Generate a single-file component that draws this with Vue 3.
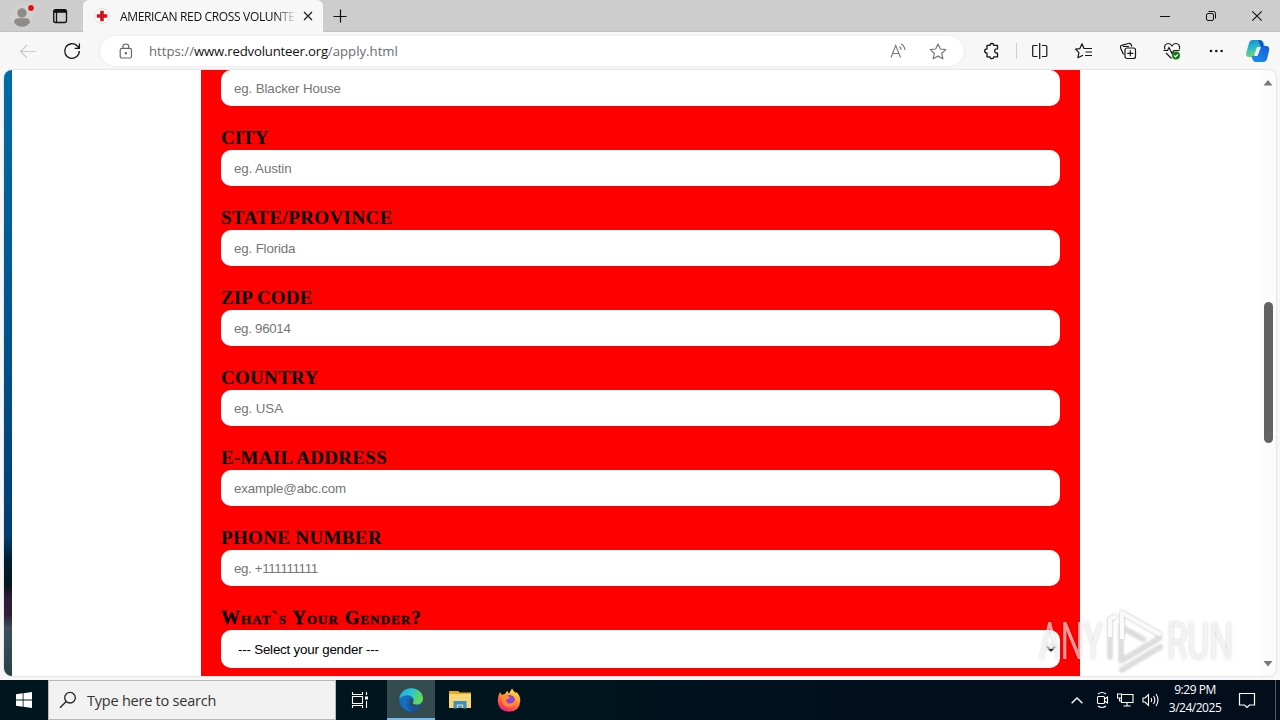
<template>
  <div class="desktop">
    <header class="tabBar">
      <div class="profile">
        <svg width="40" height="32" viewBox="0 0 40 32">
          <circle cx="22" cy="16" r="11.5" fill="#d3d1d0" />
          <circle cx="22" cy="13" r="4.7" fill="#8f8b89" />
          <path d="M14 22.500q0-4.300 4.500-4.300h7q4.500 0 4.500 4.300-3 4.200-8 4.200t-8-4.200z" fill="#8f8b89" />
          <circle cx="31" cy="8" r="3.700" fill="#e1dfde" />
          <circle cx="31" cy="8" r="2.900" fill="#e50b17" />
        </svg>
      </div>
      <div class="tabActions">
        <svg width="16" height="16" viewBox="0 0 16 16" fill="none" stroke="#111" stroke-width="1.300">
          <rect x="1.700" y="1.700" width="12.800" height="12.800" rx="2" />
          <path d="M2 3.300h12" stroke-width="3" />
          <path d="M4.500 4v10.500" />
        </svg>
      </div>
      <div class="tab">
        <svg class="favicon" width="16" height="16" viewBox="0 0 16 16">
          <circle cx="8" cy="8" r="7.400" fill="#fff" stroke="#d9d4d4" stroke-width=".8" />
          <path d="M6.200 2.800h3.600v3.400h3.500v3.600H9.800v3.500H6.200V9.800H2.800V6.200h3.400z" fill="#d9101b" />
        </svg>
        <span class="tabTitle">AMERICAN RED CROSS VOLUNTE</span>
        <svg width="10" height="10" viewBox="0 0 10 10" stroke="#222" stroke-width="1.300"><path d="M1 1l8 8M9 1L1 9" /></svg>
      </div>
      <svg class="newTab" width="14" height="14" viewBox="0 0 14 14" stroke="#111" stroke-width="1.200"><path d="M.5 7.500h13M7.500.500v13" /></svg>
      <div class="windowButtons">
        <svg width="46" height="32" viewBox="0 0 46 32" stroke="#111"><path d="M18 16.500h10" /></svg>
        <svg width="46" height="32" viewBox="0 0 46 32" fill="none" stroke="#111">
          <rect x="18.500" y="13.500" width="7" height="7" rx="1.500" />
          <path d="M20.500 11.500h5q2 0 2 2v5" />
        </svg>
        <svg width="46" height="32" viewBox="0 0 46 32" stroke="#111" stroke-width="1.100"><path d="M18.300 11.300l9.400 9.400M27.700 11.300l-9.400 9.400" /></svg>
      </div>
    </header>

    <nav class="toolbar">
      <svg class="back" width="18" height="16" viewBox="0 0 18 16" fill="none" stroke="#c9c9c9" stroke-width="1.200"><path d="M17 8.500H1.500M8 2L1.500 8.500 8 15" /></svg>
      <svg class="reload" width="18" height="18" viewBox="0 0 18 18" fill="none" stroke="#161616" stroke-width="1.300"><path d="M16.300 9a7.300 7.300 0 1 1-2-5l2 2.200M16.400 1.500v4.800h-4.800" /></svg>
      <div class="addressBar">
        <svg width="14" height="16" viewBox="0 0 14 16" fill="none" stroke="#666" stroke-width="1.200">
          <rect x="1.200" y="5.300" width="11.300" height="9.700" rx="1.800" />
          <path d="M4 5V3.300q0-2.300 2.850-2.300T9.700 3.300V5" />
          <circle cx="6.900" cy="10.200" r=".6" fill="#666" />
        </svg>
        <p class="url"><span class="urlScheme">https://</span><span class="urlHost">www.redvolunteer.org</span><span class="urlPath">/apply.html</span></p>
        <svg class="readAloud" width="17" height="16" viewBox="0 0 17 16" fill="none" stroke="#777" stroke-width="1.100"><path d="M1 14.500L5.700 2.500l4.900 12M2.600 10.500H9M9.500 3.500q1.600 1.300 1.700 3.500M11 .8q3.500 2 4 6.200" /></svg>
        <svg width="18" height="17" viewBox="0 0 18 17" fill="none" stroke="#777" stroke-width="1.200" stroke-linejoin="round"><path d="M9 1l2.300 5 5.500.6-4.100 3.700 1.200 5.500L9 13.100l-4.900 2.700 1.200-5.500L1.200 6.600 6.700 6z" /></svg>
      </div>
      <div class="tools">
        <svg width="18" height="18" viewBox="0 0 18 18" fill="none" stroke="#151515" stroke-width="1.300" stroke-linejoin="round"><path d="M4 3.300h3q0-1.800 1.900-1.800t1.900 1.800h3.700v3.600c-2-.3-2.800.8-2.800 2.100s.8 2.300 2.800 2.100v3.800h-3.700q0 1.700-1.900 1.700T7 14.900H4v-3.800Q1.700 11 1.700 9T4 6.900z" /></svg>
        <i class="divider"></i>
        <svg width="18" height="18" viewBox="0 0 18 18" fill="none" stroke="#151515" stroke-width="1.200"><path d="M6.500 3.500H2.700q-1 0-1 1v9q0 1 1 1h3.800M11 3.500h3.800q1 0 1 1v9q0 1-1 1H11M8.700 1v16" /></svg>
        <svg width="18" height="18" viewBox="0 0 18 18" fill="none" stroke="#151515" stroke-width="1.200" stroke-linejoin="round"><path d="M9.800 6.500H9L7 1.800 4.900 6.600l-4.300.6 3.300 3.500-1 5L8 13.200M9.500 6.500H17M10.500 10H17M10 13.500h7" /></svg>
        <svg width="18" height="18" viewBox="0 0 18 18" fill="none" stroke="#151515" stroke-width="1.200">
          <path d="M4.500 12.500L1.800 6.500q-1-2.500 1-3.200L9.500 1.500q2-.6 2.700 1.200l.6 1.800M4 4.500h6" />
          <rect x="6" y="6" width="10.500" height="10.500" rx="2" fill="#f7f7f7" />
          <path d="M11.300 8.300v6M8.300 11.300h6" />
        </svg>
        <svg width="19" height="18" viewBox="0 0 19 18" fill="none" stroke="#151515" stroke-width="1.200">
          <path d="M2 7.500C.5 3.500 3 1.500 5.300 1.500 7.500 1.500 8.800 3.500 9 3.800c.2-.3 1.500-2.300 3.700-2.300 2.800 0 5 2.600 3.600 6M.5 8.500h4l1.500-3 3 6 1.800-3h5.700M3 11l5.500 5.500" />
          <circle cx="13" cy="13.500" r="4" fill="#147a1b" stroke="none" />
          <path d="M11.200 13.500l1.300 1.300 2.400-2.500" stroke="#fff" />
        </svg>
        <svg width="18" height="18" viewBox="0 0 18 18" fill="#151515"><circle cx="3" cy="9" r="1.300" /><circle cx="8.300" cy="9" r="1.300" /><circle cx="13.600" cy="9" r="1.300" /></svg>
      </div>
      <svg class="copilot" width="26" height="24" viewBox="0 0 26 24">
        <defs>
          <linearGradient id="copilotLeft" x1="0" y1="0" x2=".3" y2="1"><stop offset="0" stop-color="#1287d5" /><stop offset=".5" stop-color="#25b9cf" /><stop offset="1" stop-color="#80d75e" /></linearGradient>
          <linearGradient id="copilotRight" x1="0" y1="1" x2="1" y2="0"><stop offset="0" stop-color="#1a93f2" /><stop offset="1" stop-color="#155bd4" /></linearGradient>
        </defs>
        <path d="M7 1h8q3 0 4 4l1 3h-4q-3 0-4 4l-1.500 4q-1 2-3.500 2H4q-4 0-2.500-5L4 4q1-3 3-3z" fill="url(#copilotLeft)" />
        <path d="M19 7h2q4 0 3 5l-2 8q-1 3-4 3h-7q-3 0-4-4l-.5-2Q9.500 17.500 11 14l2-5q1-2 6-2z" fill="url(#copilotRight)" />
        <path d="M12 8h4l-3.500 9H9z" fill="#eefaff" />
        <path d="M13 1q4 0 5 4l.7 2.500L16 8l-2-5q-.5-1.500-1-2z" fill="#164bbb" />
      </svg>
    </nav>

    <main class="viewport">
      <div class="pageEdge"></div>
      <form class="applyForm">
        <div class="field" v-for="field in fields" :key="field.placeholder">
          <label v-if="field.label" :style="{ letterSpacing: field.spacing + 'px' }">{{ field.label }}</label>
          <input type="text" :placeholder="field.placeholder" :style="{ letterSpacing: field.hintSpacing + 'px' }" />
        </div>
        <div class="field">
          <label class="smallCaps">What`s Your Gender?</label>
          <div class="select">
            <span>--- Select your gender ---</span>
            <svg width="10" height="8" viewBox="0 0 10 8" fill="none" stroke="#333" stroke-width="2"><path d="M1 1.500l4 4 4-4" /></svg>
          </div>
        </div>
      </form>
      <div class="scrollbar">
        <svg width="10" height="6" viewBox="0 0 10 6" fill="#777"><path d="M5 0l4.500 5.500h-9z" /></svg>
        <i class="thumb"></i>
        <svg width="10" height="6" viewBox="0 0 10 6" fill="#777"><path d="M5 5.500L.5 0h9z" /></svg>
      </div>
    </main>

    <footer class="taskbar">
      <div class="start">
        <svg width="16" height="16" viewBox="0 0 16 16" fill="#fff"><path d="M0 2.200l6.700-.9v6.300H0zM7.500 1.200L16 0v7.600H7.500zM0 8.400h6.700v6.300L0 13.800zM7.500 8.400H16V16l-8.500-1.200z" /></svg>
      </div>
      <div class="search">
        <svg width="18" height="18" viewBox="0 0 18 18" fill="none" stroke="#222" stroke-width="1.300"><circle cx="11" cy="6.700" r="5.300" /><path d="M7.200 10.500L1 16.800" /></svg>
        <span>Type here to search</span>
      </div>
      <div class="taskItem">
        <svg width="18" height="18" viewBox="0 0 18 18" fill="none" stroke="#fff" stroke-width="1.100"><path d="M1.500 1v2.500h10V1M1.500 17v-2.500h10V17M1.500 5.500h10v7h-10zM15.500 1v3M15.500 10v7" /><path d="M14 5.500h3v3h-3z" fill="#fff" stroke="none" /></svg>
      </div>
      <div class="taskItem active">
        <svg width="24" height="24" viewBox="0 0 24 24">
          <defs>
            <linearGradient id="edgeTop" x1="0" y1="0" x2="1" y2=".4"><stop offset="0" stop-color="#25a5df" /><stop offset=".5" stop-color="#2bc5d2" /><stop offset="1" stop-color="#66d956" /></linearGradient>
            <linearGradient id="edgeBody" x1="0" y1="0" x2=".6" y2="1"><stop offset="0" stop-color="#1584d5" /><stop offset="1" stop-color="#1450a0" /></linearGradient>
          </defs>
          <circle cx="12" cy="12" r="11.700" fill="url(#edgeBody)" />
          <path d="M.4 11C1 4.500 6 .3 12 .3 19 .3 24 5 24 10.500c0 4-3 6-6.500 6-2.500 0-4-1-3.500-2 1.500-2 .8-5.500-3-6.800C7 6.500 2.500 8 .4 11z" fill="url(#edgeTop)" />
          <path d="M10.500 8.500C5 10 5.500 20 13 23.500 8 24 3.500 20 3.500 15c0-4 3-7 7-6.500z" fill="#1b6fc0" />
          <path d="M13.500 14.500c0 3 4 4.500 9.300 2.200.5 0 .7.300.4.700l1 2-1.200-2.200C20 19.500 15 20 12.500 18c-3-3-2.500-6.500 0-7.500 1.500 1 1.800 2.500 1 4z" fill="#344b50" />
        </svg>
      </div>
      <div class="taskItem">
        <svg width="22" height="20" viewBox="0 0 22 20">
          <path d="M0 1h9l2 1.500h11V18H0z" fill="#e9a92b" />
          <path d="M0 4h22v14H0z" fill="#f8d672" />
          <path d="M4.500 11h13v7.500h-3.300v-4H7.800v4H4.500z" fill="#3a8fcf" />
          <path d="M9 15.500h4v2.500H9z" fill="#4d9fd8" />
        </svg>
      </div>
      <div class="taskItem">
        <svg width="24" height="24" viewBox="0 0 24 24">
          <defs><linearGradient id="fox" x1=".8" y1="0" x2=".3" y2="1"><stop offset="0" stop-color="#fff04a" /><stop offset=".45" stop-color="#ff9527" /><stop offset=".8" stop-color="#ff4055" /><stop offset="1" stop-color="#e5208a" /></linearGradient></defs>
          <path d="M3 4l2 3q1.500-1 3-1Q9 3.500 11 3q-.2 2 1 2.500L15 .5q1.500 3 4 4.500l.5-1Q23.500 8 23.300 13 22.500 23.500 12 23.700 1 23 .7 13 .7 8 3 4z" fill="url(#fox)" />
          <circle cx="12.500" cy="12.500" r="5.600" fill="#8645dd" />
          <path d="M5 8.500q3-2 6-.5l2 1.500q-.5 1.500-3 1.800-2 1.500.5 3.700Q15 17 18 12q1 6-5 7-7 0-8-6z" fill="#ff8b2a" />
        </svg>
      </div>
      <div class="tray">
        <svg width="12" height="7" viewBox="0 0 12 7" fill="none" stroke="#fff" stroke-width="1.300"><path d="M.6 6.300L6 1l5.400 5.300" /></svg>
        <svg width="14" height="18" viewBox="0 0 14 18" fill="none" stroke="#fff" stroke-width="1.100"><rect x="2.500" y="5.500" width="7" height="7" rx="1" /><path d="M9.500 8l3-2v6l-3-2M3 3q4-3 8 0M3 15q4 3 8 0" /></svg>
        <svg width="17" height="14" viewBox="0 0 17 14" fill="none" stroke="#fff" stroke-width="1.100"><path d="M5 1.500h11v8H4.500V5.500M10 9.500v3M6.500 13h7M.5 1h4v4h-4zM2.500 5v3h2" /></svg>
        <svg width="18" height="14" viewBox="0 0 18 14" fill="none" stroke="#fff" stroke-width="1.100"><path d="M1 5h2l3.500-3.500v11L3 9H1zM9 5q1.300 2 0 4M11.500 3q2.700 4 0 8M14 1q4 6 0 12" /></svg>
      </div>
      <div class="clock">
        <span>9:29 PM</span>
        <span class="date">3/24/2025</span>
      </div>
      <svg class="notify" width="18" height="18" viewBox="0 0 18 18" fill="none" stroke="#fff" stroke-width="1.200"><path d="M1.500 2.500h15v11.500h-5L9 16.500 6.500 14h-5z" /></svg>
      <i class="showDesktop"></i>
    </footer>

    <svg class="watermark" width="220" height="72" viewBox="0 0 220 72">
      <g class="markText">
        <text x="4" y="52" textLength="64" lengthAdjust="spacingAndGlyphs">ANY</text>
        <text x="132" y="52" textLength="66" lengthAdjust="spacingAndGlyphs">RUN</text>
      </g>
      <g class="markLogo">
        <path class="markShade" d="M86 18v36l40-24M86 20l24 13" />
        <path class="markShade" d="M85 64l42-25M75 28v24" />
        <path d="M87 32V6l39 22M75 30V12l6-3" />
      </g>
    </svg>
  </div>
</template>

<script setup>
import { ref } from 'vue';

const fields = ref([
  { label: '', placeholder: 'eg. Blacker House', spacing: 0, hintSpacing: -0.12 },
  { label: 'CITY', placeholder: 'eg. Austin', spacing: 0, hintSpacing: -0.1 },
  { label: 'STATE/PROVINCE', placeholder: 'eg. Florida', spacing: 0.4, hintSpacing: -0.15 },
  { label: 'ZIP CODE', placeholder: 'eg. 96014', spacing: 0.15, hintSpacing: -0.3 },
  { label: 'COUNTRY', placeholder: 'eg. USA', spacing: 0.3, hintSpacing: -0.1 },
  { label: 'E-MAIL ADDRESS', placeholder: 'example@abc.com', spacing: 0.28, hintSpacing: -0.16 },
  { label: 'PHONE NUMBER', placeholder: 'eg. +111111111', spacing: 0.35, hintSpacing: -0.36 },
]);
</script>

<style>
  body {
    margin: 0;
    overflow: hidden;
  }
</style>

<style scoped>
  .desktop {
    position: relative;
    width: 1280px;
    height: 720px;
    display: flex;
    flex-direction: column;
    background: #f7f7f7;
    font-family: "Open Sans", "Noto Sans", sans-serif;
    overflow: hidden;
  }

  svg {
    display: block;
    flex: none;
  }

  .tabBar {
    height: 32px;
    flex: none;
    display: flex;
    align-items: center;
    background: #cdcdcd;
    box-shadow: inset 0 -1px #c2c2c2;
  }

  .profile {
    width: 52px;
  }

  .tabActions {
    width: 31px;
  }

  .tab {
    width: 240px;
    height: 32px;
    box-sizing: border-box;
    padding: 0 11px;
    display: flex;
    align-items: center;
    background: #f7f7f7;
    border-radius: 6px 6px 0 0;
  }

  .tabTitle {
    width: 175px;
    margin: 0 8px 0 10px;
    font-size: 12px;
    letter-spacing: -0.34px;
    white-space: nowrap;
    color: #111;
    -webkit-mask-image: linear-gradient(90deg, #000 155px, transparent 176px);
    mask-image: linear-gradient(90deg, #000 155px, transparent 176px);
  }

  .newTab {
    margin-left: 10px;
  }

  .windowButtons {
    display: flex;
    margin-left: auto;
  }

  .toolbar {
    height: 38px;
    flex: none;
    display: flex;
    align-items: center;
  }

  .back {
    margin-left: 19px;
  }

  .reload {
    margin: 0 19px 0 26px;
  }

  .addressBar {
    width: 864px;
    height: 30px;
    box-sizing: border-box;
    padding: 0 17px 0 19px;
    display: flex;
    align-items: center;
    border-radius: 15px;
    background: #fff;
    box-shadow: 0 0 2px #ddd;
  }

  .url {
    flex: 1;
    margin: 0 0 0 16px;
    font-size: 13.2px;
    line-height: 20px;
    color: #6b6b6b;
    white-space: nowrap;
  }

  .urlHost {
    color: #111;
    letter-spacing: -0.2px;
  }

  .readAloud {
    margin-right: 22px;
  }

  .tools {
    display: flex;
    align-items: center;
    margin-left: 19px;
  }

  .tools > svg {
    margin-right: 26px;
  }

  .tools > svg:first-child {
    margin-right: 15px;
  }

  .divider {
    width: 1px;
    height: 16px;
    margin-right: 14px;
    background: #cfcfcf;
  }

  .copilot {
    margin-left: -7px;
  }

  .viewport {
    width: 1272px;
    height: 606px;
    flex: none;
    margin-left: 4px;
    display: flex;
    background: #fff;
    border-radius: 8px;
    box-shadow: 0 0 2px #bbb;
    overflow: hidden;
  }

  .pageEdge {
    width: 8px;
    background: linear-gradient(#006ba8 0%, #00619b 20%, #004f88 50%, #00417a 70%, #003c70 77%, #001d33 81%, #04151f 85%, #2c1b36 87%, #301f38 90%, #3a4e5b 92%, #2b3f4b 100%);
  }

  .applyForm {
    width: 879px;
    box-sizing: border-box;
    margin: 0 0 0 189px;
    padding: 0 20px;
    background: #f00;
  }

  .field {
    display: flex;
    flex-direction: column;
    margin-bottom: 20px;
  }

  .field label {
    height: 24px;
    font: bold 19px/24px "Liberation Serif", serif;
    color: #000;
    white-space: nowrap;
  }

  .field label.smallCaps {
    font-variant: small-caps;
    letter-spacing: 1.05px;
    -webkit-text-stroke: 0.3px #000;
  }

  .field input {
    height: 36px;
    box-sizing: border-box;
    border: 0;
    border-radius: 10px;
    padding: 1px 13px;
    background: #fff;
    outline: 0;
    font: 13.333px "Liberation Sans", sans-serif;
  }

  .field input::placeholder {
    color: #757575;
  }

  .select {
    height: 38px;
    box-sizing: border-box;
    border-radius: 10px;
    padding: 0 4px 0 17px;
    display: flex;
    align-items: center;
    justify-content: space-between;
    background: #fff;
    font: 13.333px "Liberation Sans", sans-serif;
    letter-spacing: -0.2px;
    color: #000;
  }

  .scrollbar {
    width: 16px;
    margin-left: auto;
    padding: 10px 0;
    box-sizing: border-box;
    display: flex;
    flex-direction: column;
    align-items: center;
    background: #fcfcfc;
  }

  .thumb {
    width: 9px;
    height: 141px;
    margin: 216px 0 218px;
    border-radius: 5px;
    background: #636363;
    flex: none;
  }

  .taskbar {
    height: 40px;
    flex: none;
    margin-top: 4px;
    display: flex;
    align-items: center;
    background: linear-gradient(90deg, #00161f 0%, #00151e 45%, #020f1e 70%, #030d1c 100%);
    color: #fff;
  }

  .start {
    width: 48px;
    display: flex;
    justify-content: center;
  }

  .search {
    width: 288px;
    height: 40px;
    box-sizing: border-box;
    border: 1px solid #b9b9b9;
    padding-left: 10px;
    display: flex;
    align-items: center;
    background: #f2f2f2;
    color: #333;
    font-size: 14.5px;
  }

  .search span {
    margin-left: 10px;
    letter-spacing: -0.23px;
    white-space: nowrap;
  }

  .taskItem {
    width: 48px;
    height: 40px;
    margin-right: 1px;
    padding-bottom: 1px;
    box-sizing: border-box;
    display: flex;
    align-items: center;
    justify-content: center;
  }

  .taskItem:nth-child(3) {
    margin-right: 3px;
  }

  .taskItem.active {
    background: #344b50;
    box-shadow: inset 0 -2px #76b9ed;
  }

  .tray {
    display: flex;
    align-items: center;
    gap: 8px;
    margin-left: auto;
  }

  .tray svg:first-child {
    margin-right: 4px;
  }

  .clock {
    width: 52px;
    margin: -2px 17px 0 9px;
    display: flex;
    flex-direction: column;
    align-items: center;
    font-size: 12px;
    line-height: 18px;
    letter-spacing: -0.48px;
    white-space: nowrap;
  }

  .showDesktop {
    width: 4px;
    height: 40px;
    margin-left: 19px;
    border-left: 1px solid #4d5963;
  }

  .watermark {
    position: absolute;
    left: 1035px;
    top: 607px;
    pointer-events: none;
    filter: drop-shadow(0 0 1.500px rgba(0, 0, 0, 0.3));
  }

  .markText {
    font: 400 52px Roboto, sans-serif;
    fill: rgba(255, 255, 255, 0.6);
  }

  .markLogo {
    fill: none;
    stroke: rgba(255, 255, 255, 0.9);
    stroke-width: 4px;
    stroke-linejoin: round;
  }

  .markShade {
    stroke: rgba(225, 225, 225, 0.8);
  }
</style>
